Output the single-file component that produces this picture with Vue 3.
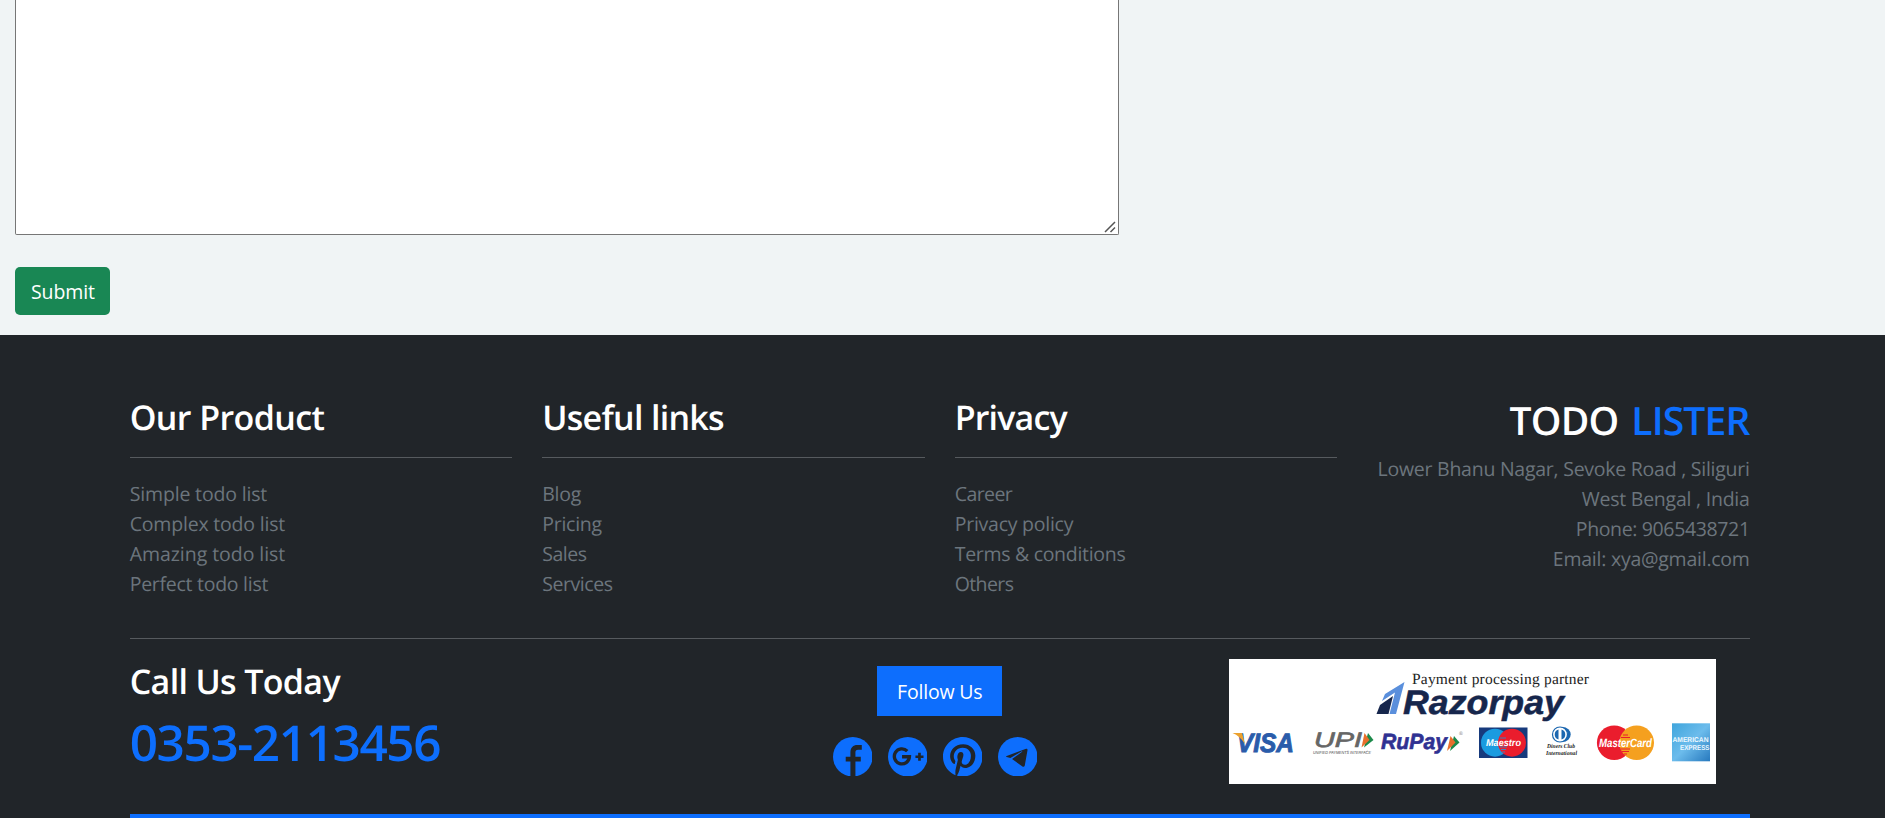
<script setup>
const columns = [
  {
    title: 'Our Product', spacing: -0.6,
    links: [
      { text: 'Simple todo list', spacing: -0.16 },
      { text: 'Complex todo list', spacing: -0.19 },
      { text: 'Amazing todo list', spacing: -0.05 },
      { text: 'Perfect todo list', spacing: -0.27 },
    ],
  },
  {
    title: 'Useful links', spacing: -0.7,
    links: [
      { text: 'Blog', spacing: -0.2 },
      { text: 'Pricing', spacing: -0.25 },
      { text: 'Sales', spacing: -0.48 },
      { text: 'Services', spacing: -0.42 },
    ],
  },
  {
    title: 'Privacy', spacing: -0.85,
    links: [
      { text: 'Career', spacing: -0.57 },
      { text: 'Privacy policy', spacing: -0.25 },
      { text: 'Terms & conditions', spacing: -0.3 },
      { text: 'Others', spacing: -0.6 },
    ],
  },
]
const address = [
  { text: 'Lower Bhanu Nagar, Sevoke Road , Siliguri', spacing: -0.25 },
  { text: 'West Bengal , India', spacing: -0.23 },
  { text: 'Phone: 9065438721', spacing: -0.36 },
  { text: 'Email: xya@gmail.com', spacing: -0.24 },
]
const tracking = (item) => ({ letterSpacing: item.spacing + 'px' })
</script>

<template>
  <div class="page">
    <main class="form">
      <div class="field">
        <textarea class="message"></textarea>
        <svg class="grip" viewBox="0 0 12 12"><path d="M1 11L11 1M6.500 11L11 6.500" stroke="#555" stroke-width="1.500" fill="none" /></svg>
      </div>
      <button class="submit">Submit</button>
    </main>
    <footer class="footer">
      <div class="container">
        <div class="columns">
          <section v-for="c in columns" :key="c.title" class="column">
            <h2 :style="tracking(c)">{{ c.title }}</h2>
            <hr />
            <ul>
              <li v-for="l in c.links" :key="l.text"><a :style="tracking(l)">{{ l.text }}</a></li>
            </ul>
          </section>
          <section class="about">
            <h1 class="brand">TODO <span>LISTER</span></h1>
            <div class="address"><p v-for="a in address" :key="a.text" :style="tracking(a)">{{ a.text }}</p></div>
          </section>
        </div>
        <hr class="divider" />
        <div class="bottom">
          <section class="call">
            <h2>Call Us Today</h2>
            <div class="phone">0353-2113456</div>
          </section>
          <section class="social">
            <button class="follow">Follow Us</button>
            <div class="icons">
              <svg viewBox="0 0 118 118"><circle cx="59" cy="59" r="59" fill="#0d6efd" /><path fill="#212529" d="M52 118V73H38V59H52V46C52 32 60 24 73 24H86V38H75C69 38 67 41 67 46V59H83V73H67V118Z" /></svg>
              <svg viewBox="0 0 118 118"><circle cx="59" cy="59" r="59" fill="#0d6efd" /><path fill="none" stroke="#212529" stroke-width="10" d="M57.500 42A22.500 22.500 0 1 0 64 59H42" /><path stroke="#212529" stroke-width="8" d="M82 59H106M94 47V71" /></svg>
              <svg viewBox="0 8 496 496"><path fill="#0d6efd" d="M496 256c0 137-111 248-248 248-25.6 0-50.2-3.9-73.4-11.1 10.1-16.5 25.2-43.5 30.8-65 3-11.6 15.4-59 15.4-59 8.1 15.4 31.7 28.5 56.8 28.5 74.8 0 128.7-68.8 128.7-154.3 0-81.9-66.9-143.2-152.9-143.2-107 0-163.9 71.8-163.9 150.1 0 36.4 19.4 81.7 50.3 96.1 4.7 2.2 7.2 1.2 8.3-3.3.8-3.4 5-20.3 6.900-28.100.6-2.500.3-4.700-1.700-7.100-10.100-12.500-18.300-35.300-18.300-56.600 0-54.700 41.400-107.600 112-107.600 60.900 0 103.600 41.500 103.600 100.900 0 67.100-33.900 113.600-78 113.600-24.300 0-42.600-20.100-36.700-44.800 7-29.500 20.500-61.300 20.500-82.600 0-19-10.200-34.900-31.400-34.900-24.900 0-44.900 25.700-44.900 60.200 0 22 7.400 36.800 7.400 36.800s-24.500 103.800-29 123.200c-5 21.400-3 51.600-.9 71.200C65.400 450.900 0 361.100 0 256 0 119 111 8 248 8s248 111 248 248z" /></svg>
              <svg viewBox="0 0 118 118"><circle cx="59" cy="59" r="59" fill="#0d6efd" /><path fill="#212529" d="M26 57L84 35Q89 34 88 40L80 85Q78 91 73 88L42 66L72 44Q74 41 70 43L37 63L26 60Q22 58.500 26 57Z" /></svg>
            </div>
          </section>
          <section class="payments">
            <svg viewBox="0 0 487 125" width="487" height="125">
              <defs>
                <linearGradient id="amex" x1="0" y1="0" x2="1" y2="1"><stop offset="0" stop-color="#3fa5dc" /><stop offset=".5" stop-color="#6cbcec" /><stop offset="1" stop-color="#2779be" /></linearGradient>
              </defs>
              <rect width="487" height="125" fill="#fff" />
              <text class="serif" x="183" y="24.800" font-size="15.500" textLength="177">Payment processing partner</text>
              <path fill="#16264c" d="M147.500 55L151 46L164 37L159.500 55Z" />
              <path fill="#5a8fdc" d="M153 42L156 35L175.500 23L167 55H160.500L166 33.500Z" />
              <text class="logo" x="174" y="54.700" font-size="34" fill="#16264c" stroke="#16264c" stroke-width=".5" textLength="161" lengthAdjust="spacingAndGlyphs">Razorpay</text>
              <text class="logo" x="8" y="93" font-size="26.500" fill="#2a5caa" stroke="#2a5caa" stroke-width="1" textLength="57" lengthAdjust="spacingAndGlyphs">VISA</text>
              <path fill="#eca12e" d="M3.500 74H13L16 85Q11 77 3.500 74Z" />
              <text class="thin" x="85" y="88" font-size="21" fill="#666" stroke="#666" stroke-width=".7" textLength="48" lengthAdjust="spacingAndGlyphs">UPI</text>
              <path fill="#1c8a4a" d="M139 74L144.500 81L135 88.500Z" />
              <path fill="#e86f2c" d="M135.500 74L140.500 81L132.500 88.500Z" />
              <text class="thin" x="84" y="94.500" font-size="4.500" fill="#444" textLength="58" lengthAdjust="spacingAndGlyphs">UNIFIED PAYMENTS INTERFACE</text>
              <text class="logo" x="152" y="90" font-size="22" fill="#2f3192" stroke="#2f3192" stroke-width=".6" textLength="66" lengthAdjust="spacingAndGlyphs">RuPay</text>
              <path fill="#1c8a4a" d="M225 77L230.500 83.500L221 92Z" />
              <path fill="#e86f2c" d="M221.500 77L226.500 83.500L218 92Z" />
              <text class="thin" x="230" y="76" font-size="5" fill="#777">®</text>
              <rect x="250" y="68.500" width="48.500" height="30.500" fill="#173a7c" />
              <circle cx="266" cy="83.700" r="14" fill="#1a9be0" /><circle cx="283" cy="83.700" r="14" fill="#ea1d2d" />
              <path stroke="#1a9be0" stroke-width=".8" d="M271 79H277M271 88H278M272 90.500H277M273 93H276" />
              <text class="logo" x="257" y="86.800" font-size="10" fill="#fff" textLength="35" lengthAdjust="spacingAndGlyphs">Maestro</text>
              <ellipse cx="333.500" cy="75.500" rx="8.200" ry="7.500" fill="#1b67b0" /><circle cx="331" cy="75.500" r="7.500" fill="#fff" stroke="#1b67b0" stroke-width="1.200" />
              <path fill="#1b67b0" d="M329.500 70.500V80.500A5.200 5.200 0 0 1 329.500 70.500ZM332.500 70.500V80.500A5.200 5.200 0 0 0 332.500 70.500Z" />
              <text class="diners" x="318" y="89" font-size="6" textLength="28" lengthAdjust="spacingAndGlyphs">Diners Club</text>
              <text class="diners" x="317" y="96" font-size="6" textLength="31" lengthAdjust="spacingAndGlyphs">International</text>
              <circle cx="385.200" cy="83.700" r="17.300" fill="#ea1d2d" /><circle cx="407.700" cy="83.700" r="17.300" fill="#f5a01f" />
              <path stroke="#ea1d2d" stroke-width="1" d="M394 76H399M392 78.500H401M392 90H401M393 92.500H400M395 95H398" />
              <text class="logo" x="370" y="87.700" font-size="12" fill="#fff" textLength="53" lengthAdjust="spacingAndGlyphs">MasterCard</text>
              <rect x="443" y="64.300" width="38" height="38" fill="url(#amex)" />
              <text class="amex" x="443.500" y="83" font-size="7" textLength="36" lengthAdjust="spacingAndGlyphs">AMERICAN</text>
              <text class="amex" x="451" y="91" font-size="7" textLength="29.500" lengthAdjust="spacingAndGlyphs">EXPRESS</text>
            </svg>
          </section>
        </div>
        <div class="bar"></div>
      </div>
    </footer>
  </div>
</template>

<style>
body { margin: 0; overflow: hidden; }
</style>
<style scoped>
.page { height: 818px; overflow: hidden; background: #f0f4f5; font: 19.5px/30px 'Open Sans', 'Noto Sans', sans-serif; text-rendering: geometricPrecision; }
.form { height: 335px; display: flex; flex-direction: column; align-items: flex-start; padding-left: 15px; box-sizing: border-box; }
.field { position: relative; flex: none; width: 1104px; height: 235px; }
.message { display: block; box-sizing: border-box; width: 100%; height: 100%; border: 1px solid #767676; border-top: 0; border-radius: 0 0 2px 2px; margin: 0; background: #fff; resize: none; outline: 0; }
.grip { position: absolute; right: 3px; bottom: 2px; width: 12px; height: 12px; }
.submit { margin-top: 32px; width: 95px; height: 48px; padding: 2px 0 0 1px; border: 0; border-radius: 5px; background: #198754; color: #fff; font: inherit; letter-spacing: -0.1px; }
.footer { height: 483px; background: #212529; }
.container { width: 1620px; margin: 0 0 0 129.7px; display: flow-root; }
.columns { display: grid; grid-template-columns: repeat(4, 382.5px); gap: 30px; height: 303px; padding-top: 61px; box-sizing: border-box; }
h1, h2, p, ul { margin: 0; padding: 0; list-style: none; }
h2 { color: #fff; font-size: 34px; line-height: 42px; font-weight: 600; }
.column hr { border: 0; height: 1px; background: #565a5e; margin: 19px 0 21px; }
a, .address { color: #6c757d; }
.brand { color: #fff; font-size: 39px; line-height: 48px; font-weight: 600; text-align: right; white-space: nowrap; margin-top: 1px; letter-spacing: -0.8px; word-spacing: 3.5px; }
.brand span { color: #0d6efd; }
.address { text-align: right; margin-top: 9px; white-space: nowrap; }
.divider { border: 0; height: 1px; background: #565a5e; margin: 0; }
.bottom { display: grid; grid-template-columns: 675px 300px 1fr; height: 175px; }
.call { padding-top: 21px; }
.call h2 { letter-spacing: -0.65px; }
.phone { color: #0d6efd; font-size: 49.5px; line-height: 60px; font-weight: 600; margin-top: 10px; letter-spacing: -1.4px; }
.social { padding-top: 27px; display: flex; flex-direction: column; align-items: flex-start; }
.follow { margin-left: 72px; width: 125px; height: 50px; border: 0; padding: 2px 0 0 1px; background: #0d6efd; color: #fff; font: inherit; letter-spacing: -0.2px; }
.icons { display: flex; gap: 15.4px; margin: 20.5px 0 0 28.2px; }
.icons svg { width: 39.5px; height: 39.5px; }
.payments { padding: 20px 0 0 124.3px; }
.payments svg { display: block; }
.bar { height: 4px; background: #0d6efd; }
.serif { font-family: 'Liberation Serif', serif; fill: #222; }
.logo { font-family: 'Liberation Sans', sans-serif; font-weight: 700; font-style: italic; }
.thin { font-family: 'Liberation Sans', sans-serif; font-style: italic; }
.diners { font-family: 'Liberation Serif', serif; font-style: italic; font-weight: 700; fill: #222; }
.amex { font-family: 'Liberation Sans', sans-serif; font-weight: 700; fill: #eef8ff; }
</style>
